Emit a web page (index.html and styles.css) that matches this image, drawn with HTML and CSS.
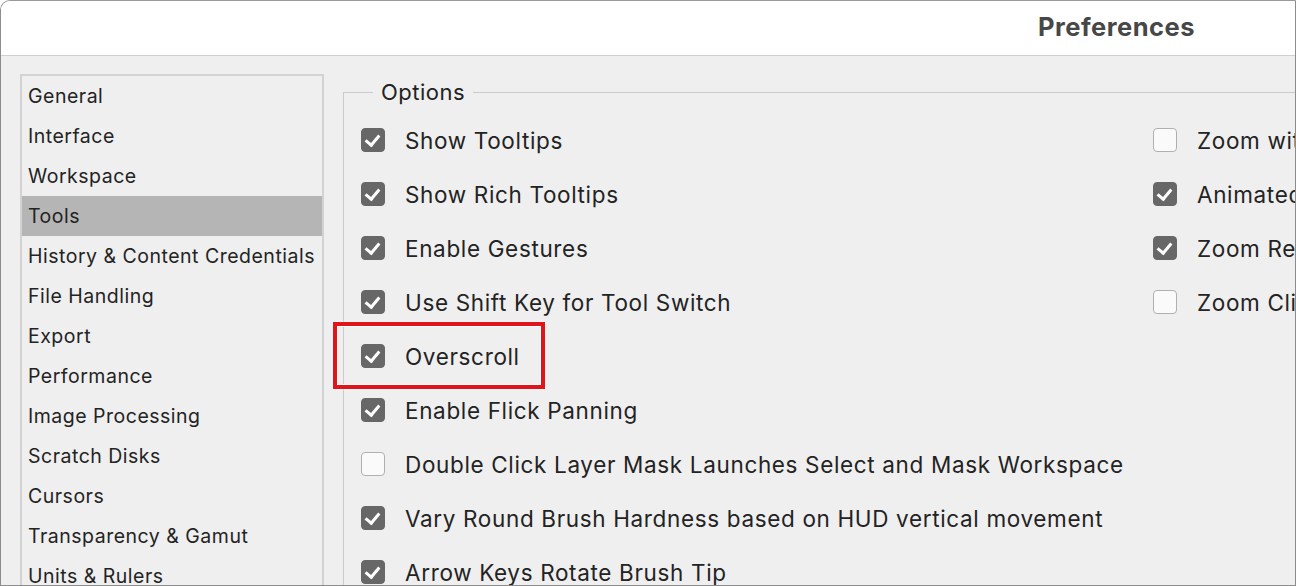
FILE: index.html
```html
<!DOCTYPE html>
<html lang="en">
<head>
    <meta charset="UTF-8">
    <meta name="viewport" content="width=device-width, initial-scale=1.0">
    <title>Preferences</title>
    <link rel="stylesheet" href="styles.css">
</head>
<body>
    <div class="window">
        <div class="titlebar">Preferences</div>
        <div class="body">
            <ul class="nav">
                <li>General</li>
                <li>Interface</li>
                <li>Workspace</li>
                <li class="on">Tools</li>
                <li>History &amp; Content Credentials</li>
                <li>File Handling</li>
                <li>Export</li>
                <li>Performance</li>
                <li>Image Processing</li>
                <li>Scratch Disks</li>
                <li>Cursors</li>
                <li>Transparency &amp; Gamut</li>
                <li>Units &amp; Rulers</li>
            </ul>

            <fieldset class="group">
                <legend>Options</legend>
                <div class="cols">
                    <div class="col col-1">
                        <label class="opt"><span class="box checked"></span>Show Tooltips</label>
                        <label class="opt"><span class="box checked"></span>Show Rich Tooltips</label>
                        <label class="opt"><span class="box checked"></span>Enable Gestures</label>
                        <label class="opt"><span class="box checked"></span>Use Shift Key for Tool Switch</label>
                        <label class="opt mark"><span class="box checked"></span>Overscroll<span class="callout"></span></label>
                        <label class="opt"><span class="box checked"></span>Enable Flick Panning</label>
                        <label class="opt"><span class="box"></span>Double Click Layer Mask Launches Select and Mask Workspace</label>
                        <label class="opt"><span class="box checked"></span>Vary Round Brush Hardness based on HUD vertical movement</label>
                        <label class="opt"><span class="box checked"></span>Arrow Keys Rotate Brush Tip</label>
                    </div>
                    <div class="col col-2">
                        <label class="opt"><span class="box"></span>Zoom with Scroll Wheel</label>
                        <label class="opt"><span class="box checked"></span>Animated Zoom</label>
                        <label class="opt"><span class="box checked"></span>Zoom Resizes Windows</label>
                        <label class="opt"><span class="box"></span>Zoom Clicked Point to Center</label>
                    </div>
                </div>
            </fieldset>
        </div>
    </div>
</body>
</html>
```

FILE: styles.css
```css
*{ margin: 0; padding: 0; box-sizing: border-box;}
html, body{ height: 100%; overflow: hidden;}
body{ font-family: "Inter", "Liberation Sans", sans-serif; color: #232323; background: #fff;}

.window{ height: 586px; width: 1296px; border: 1px solid #8c8c8c; border-top-color: #9a9a9a; border-top-left-radius: 10px; background: #efefef; overflow: hidden;}

.titlebar{ height: 55px; background: #fff; border-bottom: 1px solid #cfcfcf; text-align: right; padding-right: 100px; font-size: 25.5px; letter-spacing: 0.5px; font-weight: 700; color: #474747; line-height: 52px;}

.body{ display: flex; gap: 19px; padding: 18px 0 0 19px;}

.nav{ list-style: none; width: 304px; flex: none; border: 2px solid #d2d2d2; border-bottom: none; height: 600px;}
.nav li{ height: 40px; line-height: 40px; padding-left: 6px; font-size: 19.5px; letter-spacing: 0.5px; white-space: nowrap;}
.nav li.on{ background: #b5b5b5;}

.group{ flex: 1; border: none; border-top: 1px solid #cbcbcb; border-left: 1px solid #cbcbcb; margin-top: 6px; padding: 9px 0 0 17px; min-width: 0;}
.group legend{ font-size: 22px; letter-spacing: 0.5px; margin-left: 12px; padding: 0 8px; line-height: 24px; color: #222;}

.cols{ display: flex;}
.col-1{ width: 792px; flex: none;}

.opt{ position: relative; display: flex; align-items: center; gap: 20px; height: 54px; font-size: 22.5px; letter-spacing: 0.65px; white-space: nowrap;}

.box{ width: 24px; height: 24px; border-radius: 4px; border: 1.5px solid #b0b0b0; background: #fafafa; flex: none; position: relative;}
.box.checked{ background: #676767; border-color: #676767;}
.box.checked::after{ content: ""; position: absolute; left: 6px; top: 3px; width: 6px; height: 11px; border: solid #fff; border-width: 0 3px 3px 0; transform: rotate(40deg);}

.callout{ position: absolute; left: -28px; top: -7px; width: 212px; height: 67px; border: 4px solid #e2141b; box-shadow: inset 0 0 0 1px #fff, 0 0 2px #fff;}
```
